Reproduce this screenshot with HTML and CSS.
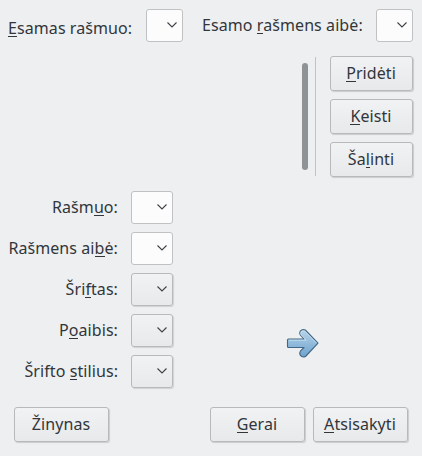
FILE: index.html
```html
<!DOCTYPE html>
<html lang="lt">
<head>
<meta charset="utf-8">
<title>Simbolis</title>
<link rel="stylesheet" href="styles.css">
</head>
<body>
<main class="dialog">
  <header class="current">
    <span class="label label-char"><u>E</u>samas rašmuo:</span>
    <div class="combo edit"><svg class="chevron" viewBox="0 0 10 6"><path d="M.5 .5 5 5 9.500 .5"/></svg></div>
    <span class="label label-set">Esamo <u>r</u>ašmens aibė:</span>
    <div class="combo edit"><svg class="chevron" viewBox="0 0 10 6"><path d="M.5 .5 5 5 9.500 .5"/></svg></div>
  </header>
  <section class="list">
    <div class="scroll"></div>
    <div class="rule"></div>
    <div class="actions">
      <button><span><u>P</u>ridėti</span></button>
      <button><span><u>K</u>eisti</span></button>
      <button><span>Ša<u>l</u>inti</span></button>
    </div>
  </section>
  <section class="details">
    <div class="form">
      <span class="label">Rašm<u>u</u>o:</span>
      <div class="combo edit"><svg class="chevron" viewBox="0 0 10 6"><path d="M.5 .5 5 5 9.500 .5"/></svg></div>
      <span class="label">Rašmens ai<u>b</u>ė:</span>
      <div class="combo edit"><svg class="chevron" viewBox="0 0 10 6"><path d="M.5 .5 5 5 9.500 .5"/></svg></div>
      <span class="label">Šri<u>f</u>tas:</span>
      <div class="combo"><svg class="chevron" viewBox="0 0 10 6"><path d="M.5 .5 5 5 9.500 .5"/></svg></div>
      <span class="label">P<u>o</u>aibis:</span>
      <div class="combo"><svg class="chevron" viewBox="0 0 10 6"><path d="M.5 .5 5 5 9.500 .5"/></svg></div>
      <span class="label">Šrifto <u>s</u>tilius:</span>
      <div class="combo"><svg class="chevron" viewBox="0 0 10 6"><path d="M.5 .5 5 5 9.500 .5"/></svg></div>
    </div>
    <svg class="arrow" viewBox="0 0 34 30">
      <defs><linearGradient id="g" x1="0" y1="0" x2="0" y2="1"><stop offset="0" stop-color="#b7d4ea"/><stop offset=".5" stop-color="#92bbdc"/><stop offset="1" stop-color="#6ea3cc"/></linearGradient></defs>
      <path class="body" d="M2.500 11H18L14.300 7Q13 5 14.200 3.200Q16.200 .8 19.300 2L32 15.200 19.500 28.500Q16.300 30 14.200 27.200Q13 25 14.300 23.200L18 19.500H2.500Q1.500 19.500 1.500 18.500V12Q1.500 11 2.500 11Z"/>
      <path class="shine" d="M2.800 12.200H20L15.400 7Q14.200 5.200 15.200 3.900Q16.600 2.300 18.800 3.100L30.500 15"/>
    </svg>
  </section>
  <footer class="footer">
    <button><span>Žinynas</span></button>
    <button class="ok"><span><u>G</u>erai</span></button>
    <button><span><u>A</u>tsisakyti</span></button>
  </footer>
</main>
</body>
</html>
```

FILE: styles.css
```css
* { box-sizing: border-box; }

body {
  margin: 0;
  background: #eeeff1;
  color: #31363b;
  font: 16px/22px "Noto Sans", sans-serif;
  letter-spacing: .08px;
}

.dialog {
  display: flex;
  flex-direction: column;
  width: 422px;
  height: 456px;
  padding: 9px 9px 14px 8px;
}

u {
  text-decoration: none;
  background: linear-gradient(#31363b, #31363b) 0 19px / 100% 1px no-repeat;
}

.label { white-space: nowrap; }

.current {
  display: flex;
  height: 47px;
}

.label-char { width: 138px; padding-top: 8px; }
.label-set { width: 174px; margin-left: 19px; padding-top: 5px; }

.combo {
  display: flex;
  align-items: center;
  justify-content: flex-end;
  width: 42px;
  height: 33px;
  padding: 0 5px 2px 0;
  border: 1px solid #b7b9bb;
  border-radius: 3px;
  background: linear-gradient(#f1f2f3, #e8e9ea);
  box-shadow: 1px 1px 1px rgba(0, 0, 0, .12);
}

.combo.edit { background: #fcfcfc; border-color: #bfc1c2; box-shadow: none; }
.current .combo { width: 37px; }

.chevron {
  width: 10px;
  height: 6px;
  fill: none;
  stroke: #3d4246;
  stroke-width: 1.1;
}

.list {
  display: flex;
  justify-content: flex-end;
  height: 135px;
}

.scroll {
  width: 6px;
  height: 107px;
  margin: 7px 7px 0 0;
  border-radius: 3px;
  background: #909395;
}

.rule {
  width: 1px;
  height: 119px;
  margin: 1px 14px 0 0;
  background: #c0c2c4;
}

.actions {
  display: flex;
  flex-direction: column;
  gap: 8px;
}

button {
  width: 83px;
  height: 35px;
  padding: 0 0 2px;
  border: 1px solid #b7b9bb;
  border-radius: 3px;
  background: linear-gradient(#f1f2f3, #e8e9ea);
  box-shadow: 1px 1px 1px rgba(0, 0, 0, .15);
  color: inherit;
  font: inherit;
  letter-spacing: inherit;
}

button span { display: block; margin-left: -1px; }

.details {
  display: flex;
  height: 216px;
}

.form {
  display: grid;
  grid-template-columns: 110px 42px;
  grid-auto-rows: 33px;
  gap: 8px 13px;
}

.form .label { padding-top: 5px; text-align: right; }

.arrow {
  width: 34px;
  height: 30px;
  margin: 137px 0 0 113px;
  overflow: visible;
}

.body { fill: url(#g); stroke: #416784; stroke-width: 1.1; stroke-linejoin: round; }
.shine { fill: none; stroke: #d3e7f5; stroke-width: 1; opacity: .7; }

.footer {
  display: flex;
  gap: 8px;
  padding: 0 5px 0 6px;
}

.footer button { width: 95px; }
.footer .ok { margin-left: auto; }
```
